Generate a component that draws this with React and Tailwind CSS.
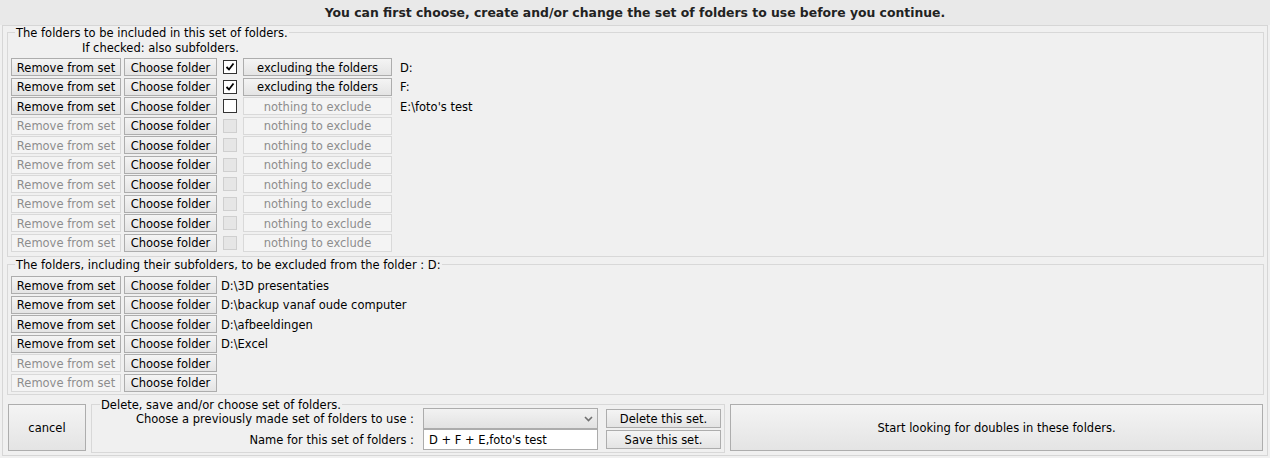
import React from 'react';

const enabledBtn =
  'h-[18px] border border-[#adadad] bg-gradient-to-b from-[#f4f4f4] to-[#e4e4e4] text-black flex items-center justify-center leading-[14px] pt-[1px]';
const disabledBtn =
  'h-[18px] border border-[#d9d9d9] bg-[#f4f4f4] text-[#8d8d8d] flex items-center justify-center leading-[14px] pt-[1px]';

function Btn({ disabled, className, children }) {
  return <div className={(disabled ? disabledBtn : enabledBtn) + ' ' + className}>{children}</div>;
}

function Check({ checked, disabled }) {
  if (disabled) {
    return <div className="w-[14px] h-[14px] border border-[#cfcfcf] bg-[#e6e6e6]" />;
  }
  return (
    <div className="w-[14px] h-[14px] border border-[#333] bg-white flex items-center justify-center">
      {checked && (
        <svg width="10" height="10" viewBox="0 0 10 10">
          <path d="M1.5 5 L4 7.5 L8.5 1.5" fill="none" stroke="#000" strokeWidth="1.8" />
        </svg>
      )}
    </div>
  );
}

const included = [
  { remove: true, checked: true, exclude: true, path: 'D:' },
  { remove: true, checked: true, exclude: true, path: 'F:' },
  { remove: true, checked: false, exclude: false, path: "E:\\foto's test" },
  {}, {}, {}, {}, {}, {}, {},
];

const excluded = [
  'D:\\3D presentaties',
  'D:\\backup vanaf oude computer',
  'D:\\afbeeldingen',
  'D:\\Excel',
  null,
  null,
];

function Legend({ children }) {
  return (
    <span className="absolute top-[-7px] left-[7px] px-[1px] bg-[#f0f0f0] leading-[14px] text-black">
      {children}
    </span>
  );
}

export default function App() {
  return (
    <div className="w-[1270px] h-[458px] bg-[#f0f0f0] text-[11.5px] leading-[14px] text-black font-['DejaVu_Sans','Verdana',sans-serif] overflow-hidden">
      <div className="h-[25px] bg-[#e9e9e9] flex items-center justify-center text-[12.4px] font-bold text-[#222]">
        You can first choose, create and/or change the set of folders to use before you continue.
      </div>

      <div className="ml-[2px] w-[1266px] h-[431px] border border-[#d6d6d6] pl-[4px] pr-[3px] pt-[6px] flex flex-col">
        {/* included folders */}
        <div className="relative border border-[#d8d8d8] pt-[8px] pb-[3px] pl-[3px]">
          <Legend>The folders to be included in this set of folders.</Legend>
          <div className="pl-[71px] h-[14px]">If checked: also subfolders.</div>
          <div className="mt-[3px] flex flex-col">
            {included.map((r, i) => (
              <div key={i} className="h-[19.5px] flex items-start">
                <Btn disabled={!r.remove} className="w-[110px]">Remove from set</Btn>
                <Btn className="w-[93px] ml-[3px]">Choose folder</Btn>
                <div className="ml-[6px] h-[18px] flex items-center">
                  <Check checked={r.checked} disabled={!r.remove} />
                </div>
                <Btn disabled={!r.exclude} className="w-[149px] ml-[6px]">
                  {r.exclude ? 'excluding the folders' : 'nothing to exclude'}
                </Btn>
                <div className="ml-[8px] h-[18px] flex items-center pt-[1px]">{r.path}</div>
              </div>
            ))}
          </div>
        </div>

        {/* excluded folders */}
        <div className="relative mt-[7px] border border-[#d8d8d8] pt-[11px] pb-[1px] pl-[3px]">
          <Legend>The folders, including their subfolders, to be excluded from the folder : D:</Legend>
          <div className="flex flex-col">
            {excluded.map((p, i) => (
              <div key={i} className="h-[19.5px] flex items-start">
                <Btn disabled={!p} className="w-[110px]">Remove from set</Btn>
                <Btn className="w-[93px] ml-[3px]">Choose folder</Btn>
                <div className="ml-[4px] h-[18px] flex items-center pt-[1px]">{p}</div>
              </div>
            ))}
          </div>
        </div>

        {/* bottom bar */}
        <div className="mt-[9px] flex items-start">
          <div className="ml-[1px] w-[78px] h-[47px] border border-[#adadad] bg-gradient-to-b from-[#f4f4f4] to-[#e4e4e4] flex items-center justify-center">
            cancel
          </div>

          <div className="relative ml-[5px] w-[634px] h-[49px] border border-[#d8d8d8] pt-[3px]">
            <span className="absolute top-[-7px] left-[8px] px-[1px] bg-[#f0f0f0] leading-[14px]">
              Delete, save and/or choose set of folders.
            </span>
            <div className="flex items-center h-[21px]">
              <div className="w-[322px] text-right">Choose a previously made set of folders to use :</div>
              <div className="ml-[9px] w-[175px] h-[21px] border border-[#acacac] bg-gradient-to-b from-[#f2f2f2] to-[#e2e2e2] flex items-center justify-end pr-[4px]">
                <svg width="9" height="6" viewBox="0 0 9 6">
                  <path d="M1 1 L4.5 4.5 L8 1" fill="none" stroke="#707070" strokeWidth="1.6" />
                </svg>
              </div>
              <Btn className="ml-[8px] w-[115px] h-[19px]">Delete this set.</Btn>
            </div>
            <div className="flex items-center h-[21px]">
              <div className="w-[322px] text-right">Name for this set of folders :</div>
              <div className="ml-[9px] w-[175px] h-[21px] border border-[#acacac] bg-white flex items-center pl-[5px]">
                D + F + E,foto's test
              </div>
              <Btn className="ml-[8px] w-[115px] h-[19px]">Save this set.</Btn>
            </div>
          </div>

          <div className="ml-[5px] w-[533px] h-[47px] border border-[#adadad] bg-gradient-to-b from-[#f4f4f4] to-[#e4e4e4] flex items-center justify-center">
            Start looking for doubles in these folders.
          </div>
        </div>
      </div>
    </div>
  );
}
